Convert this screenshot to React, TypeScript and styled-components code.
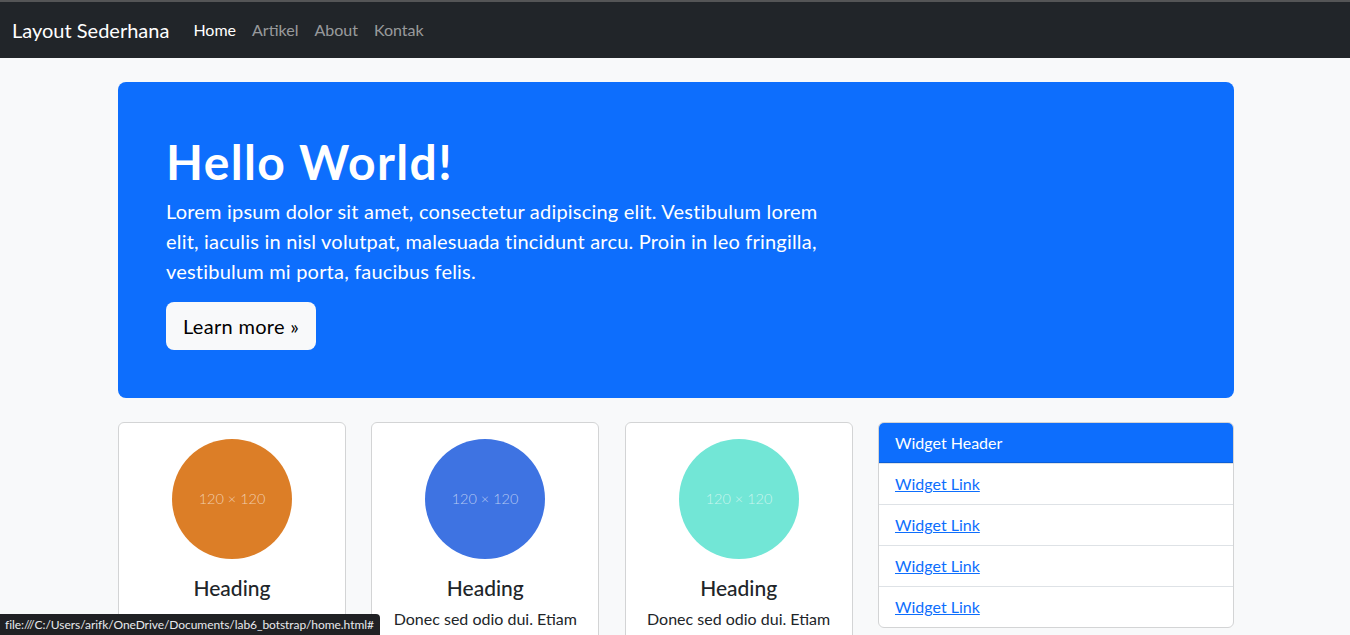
import React from "react";
import styled, { createGlobalStyle } from "styled-components";

const FONT = `"Lato", "Noto Sans", "Liberation Sans", sans-serif`;

const Global = createGlobalStyle`
  html, body { margin: 0; padding: 0; }
  body {
    background: #f8f9fa;
    font-family: ${FONT};
    font-size: 16px;
    line-height: 1.5;
    color: #212529;
    overflow: hidden;
  }
  * { box-sizing: border-box; }
`;

const TopLine = styled.div`
  height: 2px;
  background: #545556;
`;

const Navbar = styled.nav`
  background: #212529;
  height: 56px;
  display: flex;
  align-items: center;
  padding: 0 12px;
`;

const Brand = styled.a`
  color: #fff;
  font-size: 20px;
  line-height: 30px;
  margin-right: 16px;
  text-decoration: none;
`;

const NavList = styled.div`
  display: flex;
`;

const NavLink = styled.a<{ $active?: boolean }>`
  color: ${(p) => (p.$active ? "#fff" : "rgba(255,255,255,0.55)")};
  padding: 8px;
  font-size: 16px;
  line-height: 24px;
  text-decoration: none;
`;

const Container = styled.main`
  width: 1116px;
  margin: 24px 0 0 calc((100% - 1114px) / 2);
`;

const Jumbo = styled.section`
  background: #0d6efd;
  border-radius: 8px;
  padding: 48px;
  color: #fff;
`;

const Title = styled.h1`
  margin: 3px 0 5px;
  font-size: 48px;
  line-height: 58px;
  font-weight: 700;
  letter-spacing: 1.4px;
`;

const Lead = styled.p`
  width: 680px;
  margin: 0 0 16px;
  font-size: 20px;
  line-height: 30px;
  letter-spacing: 0.2px;
`;

const LightButton = styled.a`
  display: inline-block;
  background: #f8f9fa;
  color: #000;
  font-size: 20px;
  line-height: 30px;
  padding: 9px 17px;
  border-radius: 8px;
  letter-spacing: 0.3px;
  text-decoration: none;
`;

const Row = styled.div`
  display: grid;
  grid-template-columns: repeat(3, 228px) 356px;
  justify-content: space-between;
  margin-top: 24px;
  align-items: start;
`;

const Card = styled.div`
  background: #fff;
  border: 1px solid #d3d4d5;
  border-radius: 6px;
  padding: 16px 16px 0;
  text-align: center;
  height: 260px;
`;

const Heading = styled.h5`
  margin: 17px 0 7px;
  font-size: 21px;
  line-height: 24px;
  font-weight: 500;
`;

const CardText = styled.p`
  margin: 0;
  font-size: 16px;
  line-height: 24px;
`;

const Widget = styled.div`
  background: #fff;
  border: 1px solid #d3d4d5;
  border-radius: 6px;
  overflow: hidden;
`;

const WidgetHeader = styled.div`
  background: #0d6efd;
  color: #fff;
  padding: 8px 16px 7px;
  line-height: 24px;
  font-size: 16px;
  border-bottom: 1px solid #0b5ed7;
`;

const WidgetItem = styled.div`
  padding: 8px 16px;
  line-height: 24px;
  border-top: 1px solid #dee2e6;
  &:first-of-type { border-top: none; }
`;

const WidgetLink = styled.a`
  color: #0d6efd;
  text-decoration: underline;
`;

const StatusBar = styled.div`
  position: fixed;
  left: 0;
  bottom: 0;
  height: 21px;
  padding: 0 6px 0 5px;
  background: #202124;
  color: #e8eaed;
  font-family: ${FONT};
  font-size: 12px;
  line-height: 21px;
  letter-spacing: -0.06px;
  border-top-right-radius: 4px;
`;

function Placeholder({ color }: { color: string }) {
  return (
    <svg width="120" height="120" viewBox="0 0 120 120" style={{ display: "block", margin: "0 auto" }}>
      <circle cx="60" cy="60" r="60" fill={color} />
      <text
        x="60"
        y="60"
        dy="0.35em"
        textAnchor="middle"
        fill="rgba(255,255,255,0.62)"
        fontFamily={FONT}
        fontWeight={300}
        fontSize="14.5"
      >
        120 × 120
      </text>
    </svg>
  );
}

const circles = ["#dc7e27", "#3e73e2", "#72e6d6"];

export default function App() {
  return (
    <>
      <Global />
      <TopLine />
      <Navbar>
        <Brand href="#">Layout Sederhana</Brand>
        <NavList>
          <NavLink href="#" $active>Home</NavLink>
          <NavLink href="#">Artikel</NavLink>
          <NavLink href="#">About</NavLink>
          <NavLink href="#">Kontak</NavLink>
        </NavList>
      </Navbar>
      <Container>
        <Jumbo>
          <Title>Hello World!</Title>
          <Lead>
            Lorem ipsum dolor sit amet, consectetur adipiscing elit. Vestibulum lorem elit, iaculis in nisl
            volutpat, malesuada tincidunt arcu. Proin in leo fringilla, vestibulum mi porta, faucibus felis.
          </Lead>
          <LightButton href="#">Learn more »</LightButton>
        </Jumbo>
        <Row>
          {circles.map((c) => (
            <Card key={c}>
              <Placeholder color={c} />
              <Heading>Heading</Heading>
              <CardText>Donec sed odio dui. Etiam porta sem malesuada magna mollis euismod.</CardText>
            </Card>
          ))}
          <Widget>
            <WidgetHeader>Widget Header</WidgetHeader>
            {[1, 2, 3, 4].map((i) => (
              <WidgetItem key={i}>
                <WidgetLink href="#">Widget Link</WidgetLink>
              </WidgetItem>
            ))}
          </Widget>
        </Row>
      </Container>
      <StatusBar>file:///C:/Users/arifk/OneDrive/Documents/lab6_botstrap/home.html#</StatusBar>
    </>
  );
}
